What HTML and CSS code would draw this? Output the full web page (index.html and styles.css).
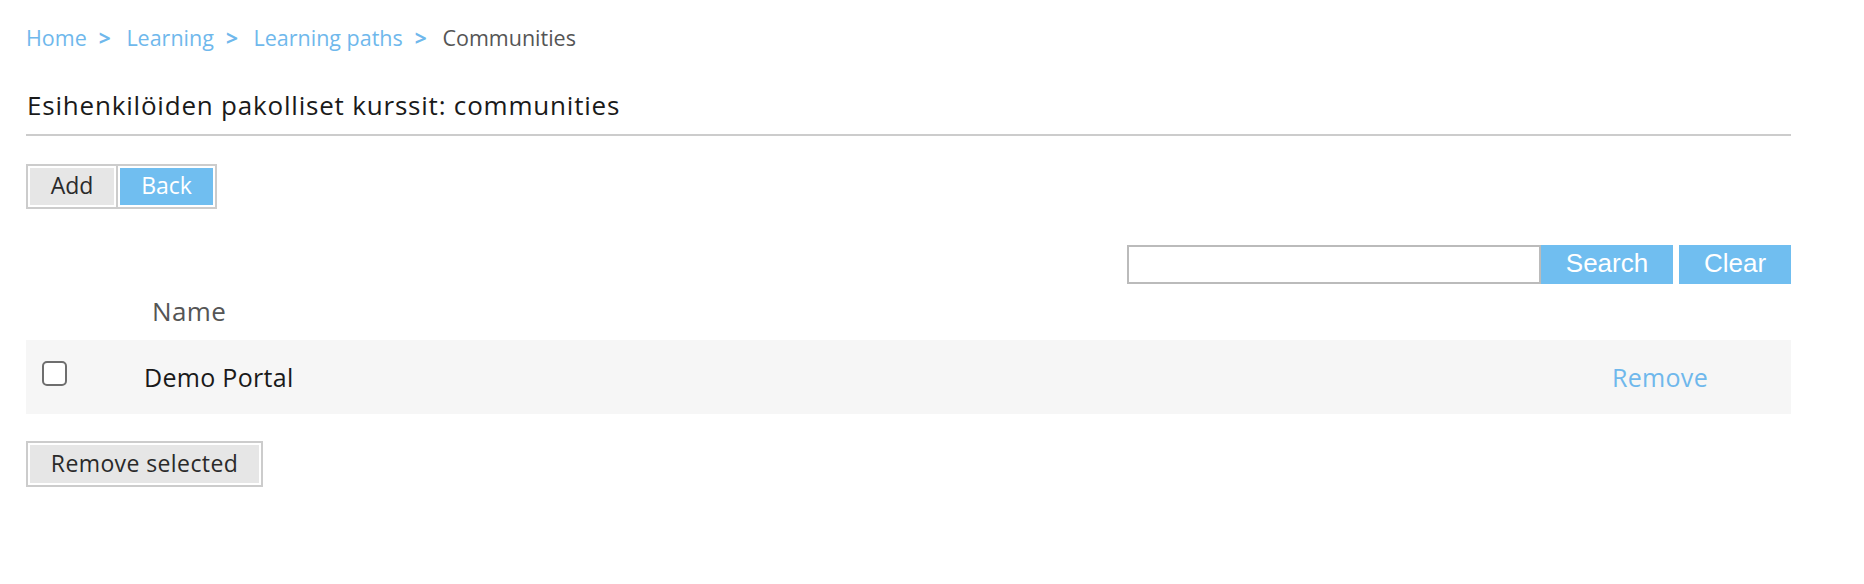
FILE: index.html
```html
<!DOCTYPE html>
<html lang="fi">
<head>
  <meta charset="UTF-8" />
  <meta name="viewport" content="width=device-width, initial-scale=1.0"/>
  <title>Communities</title>
  <link rel="stylesheet" href="styles.css">
</head>
<body>
  <div class="page">
    <nav class="breadcrumb">
      <a href="#">Home</a><span class="sep">&gt;</span>
      <a href="#">Learning</a><span class="sep">&gt;</span>
      <a href="#">Learning paths</a><span class="sep">&gt;</span>
      <span class="current">Communities</span>
    </nav>

    <h1 class="title">Esihenkilöiden pakolliset kurssit: communities</h1>

    <div class="btn-group">
      <button class="btn">Add</button>
      <button class="btn btn-blue">Back</button>
    </div>

    <div class="search-row">
      <input type="text" class="search-input">
      <button class="search-btn">Search</button>
      <button class="search-btn clear">Clear</button>
    </div>

    <div class="list">
      <div class="list-head">
        <span></span>
        <span class="col-name">Name</span>
        <span></span>
      </div>
      <div class="list-row">
        <span><input type="checkbox" class="check"></span>
        <span class="col-name">Demo Portal</span>
        <a href="#" class="remove">Remove</a>
      </div>
    </div>

    <div class="btn-group single">
      <button class="btn wide">Remove selected</button>
    </div>
  </div>
</body>
</html>
```

FILE: styles.css
```css
body {
  margin: 0;
  font-family: 'Open Sans', 'DejaVu Sans', sans-serif;
  color: #1a1a1a;
  background: #fff;
}
.page {
  padding: 23px 73px 40px 26px;
}
.breadcrumb {
  font-size: 21.5px;
  line-height: 30px;
}
.breadcrumb a {
  color: #6fb8ec;
  text-decoration: none;
}
.breadcrumb .sep {
  color: #6fb8ec;
  font-weight: bold;
  margin: 0 10px 0 12px;
  font-size: 21px;
}
.breadcrumb .current {
  color: #555;
}
.title {
  font-size: 26px;
  font-weight: normal;
  letter-spacing: 0.8px;
  line-height: 34px;
  margin: 35px 0 0;
  padding: 0 0 12px 1px;
  border-bottom: 2px solid #ccc;
}
.btn-group {
  display: inline-flex;
  gap: 2px;
  margin-top: 28px;
  border: 2px solid #ccc;
  background: #ccc;
}
.btn {
  font-family: inherit;
  font-size: 23px;
  height: 41px;
  border: 2px solid #fff;
  background: #e6e6e6;
  color: #2a2a2a;
  padding: 0 0 3px;
  width: 88px;
  cursor: pointer;
}
.btn-blue {
  background: #70bef0;
  color: #fff;
  width: 97px;
}
.btn.wide {
  width: 233px;
  height: 42px;
  letter-spacing: 0.4px;
}
.search-row {
  display: flex;
  justify-content: flex-end;
  margin-top: 36px;
}
.search-input {
  width: 414px;
  height: 39px;
  box-sizing: border-box;
  border: 2px solid #bbb;
  margin: 0;
}
.search-btn {
  font-family: 'Liberation Sans', Arial, sans-serif;
  font-size: 26px;
  width: 132px;
  height: 39px;
  border: none;
  background: #70bef0;
  color: #fff;
  padding: 0 0 3px;
  cursor: pointer;
}
.search-btn.clear {
  width: 112px;
  margin-left: 6px;
}
.list-head,
.list-row {
  display: grid;
  grid-template-columns: 118px 1fr 178px;
  align-items: center;
}
.list-head {
  height: 43px;
  margin-top: 13px;
  font-size: 26px;
  letter-spacing: 0.4px;
  color: #555;
}
.list-head .col-name {
  padding-left: 8px;
  margin-top: -16px;
}
.list-row {
  height: 74px;
  background: #f6f6f6;
  font-size: 25px;
  letter-spacing: 0.3px;
}
.check {
  appearance: none;
  display: block;
  width: 25px;
  height: 25px;
  margin: -8px 0 0 16px;
  border: 2px solid #6e6e6e;
  border-radius: 5px;
  background: #fff;
  box-sizing: border-box;
}
.remove {
  color: #6fb8ec;
  text-decoration: none;
  letter-spacing: 0.3px;
  margin-left: -1px;
}
.btn-group.single {
  margin-top: 27px;
}
```
